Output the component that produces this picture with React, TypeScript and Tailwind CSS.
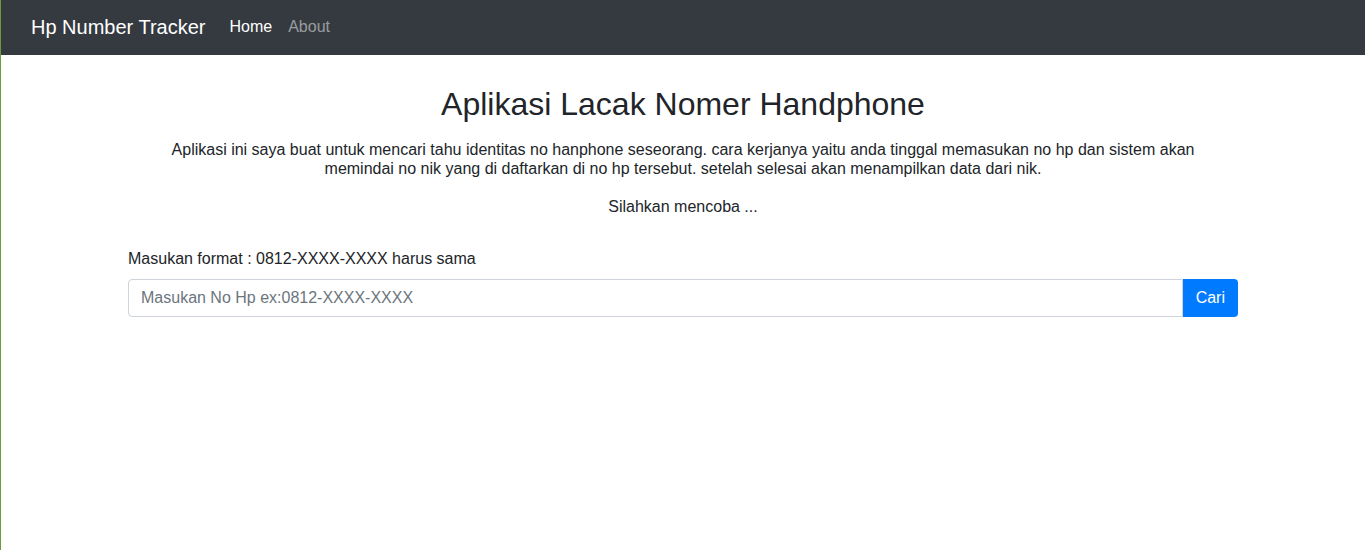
import { useState } from 'react';

export default function App() {
  const [phone, setPhone] = useState('');

  return (
    <div className="min-h-[550px] border-l border-[#6a9c3e] bg-white font-['Liberation_Sans',Arial,sans-serif] text-[#212529]">
      <nav className="flex h-[55px] items-center bg-[#343a40] px-[30px] pb-[2px]">
        <a href="#" className="mr-4 text-[20px] leading-[30px] text-white">
          Hp Number Tracker
        </a>
        <ul className="flex">
          <li>
            <a href="#" className="block px-2 text-base leading-6 text-white">
              Home
            </a>
          </li>
          <li>
            <a href="#" className="block px-2 text-base leading-6 text-white/50">
              About
            </a>
          </li>
        </ul>
      </nav>

      <div className="mx-auto w-[1140px] px-[15px]">
        <h2 className="mt-[30px] text-center text-[32px] leading-[38px]">Aplikasi Lacak Nomer Handphone</h2>
        <p className="mx-auto mt-[17px] w-[1050px] text-center text-base leading-[19px]">
          Aplikasi ini saya buat untuk mencari tahu identitas no hanphone seseorang. cara kerjanya yaitu anda tinggal
          memasukan no hp dan sistem akan memindai no nik yang di daftarkan di no hp tersebut. setelah selesai akan
          menampilkan data dari nik.
        </p>
        <p className="mt-[19px] text-center text-base leading-[19px]">Silahkan mencoba ...</p>

        <label className="mt-[31px] mb-2 block text-base leading-6">Masukan format : 0812-XXXX-XXXX harus sama</label>
        <div className="flex h-[38px]">
          <input
            type="text"
            value={phone}
            onChange={(e) => setPhone(e.target.value)}
            placeholder="Masukan No Hp ex:0812-XXXX-XXXX"
            className="h-full flex-1 rounded-l-[4px] border border-[#ced4da] px-3 text-base text-[#495057] outline-none placeholder:text-[#6c757d]"
          />
          <button className="h-full rounded-r-[4px] bg-[#007bff] px-[13px] text-base text-white">Cari</button>
        </div>
      </div>
    </div>
  );
}
